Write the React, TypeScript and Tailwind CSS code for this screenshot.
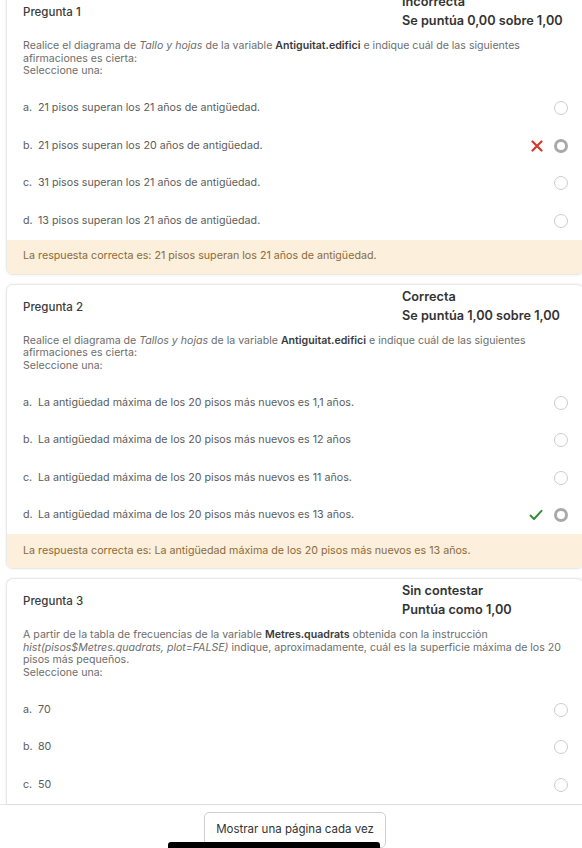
import React from 'react';

type Option = { letter: string; text: string; selected?: boolean; mark?: 'wrong' | 'right' };

function Radio({ checked }: { checked?: boolean }) {
  return (
    <span
      className={
        checked
          ? 'block w-[14px] h-[14px] rounded-full border-[3px] border-[#a9a9a9] bg-white'
          : 'block w-[14px] h-[14px] rounded-full border border-[#cdcdcd] bg-white'
      }
    />
  );
}

function WrongMark() {
  return (
    <svg width="12" height="12" viewBox="0 0 12 12" className="mr-[11px]">
      <path d="M1.5 1.5 L10.5 10.5 M10.5 1.5 L1.5 10.5" stroke="#d2392b" strokeWidth="2.2" strokeLinecap="round" />
    </svg>
  );
}

function RightMark() {
  return (
    <svg width="14" height="12" viewBox="0 0 14 12" className="mr-[11px]">
      <path d="M1.5 6.5 L5 10 L12.5 1.8" stroke="#3b8a3a" strokeWidth="2" fill="none" strokeLinecap="round" strokeLinejoin="round" />
    </svg>
  );
}

function OptionRow({ o }: { o: Option }) {
  return (
    <div className="flex items-center h-[37.5px] pl-[16px] pr-[15px] text-[10.7px] text-[#5c5c5c]">
      <span className="w-[15px] shrink-0">{o.letter}.</span>
      <span className="flex-1">{o.text}</span>
      {o.mark === 'wrong' && <WrongMark />}
      {o.mark === 'right' && <RightMark />}
      <Radio checked={o.selected} />
    </div>
  );
}

function Header({ n, state, grade }: { n: number; state: string; grade: string }) {
  return (
    <div className="flex items-center pt-[2px] pl-[16px]">
      <div className="w-[379px] text-[11.5px] font-medium text-[#3a3a3a] pt-[4px]">Pregunta {n}</div>
      <div className="text-[12.7px] font-semibold text-[#333] leading-[19px]">
        <div>{state}</div>
        <div>{grade}</div>
      </div>
    </div>
  );
}

function Card({
  n,
  state,
  grade,
  text,
  options,
  feedback,
  last,
}: {
  n: number;
  state: string;
  grade: string;
  text: React.ReactNode;
  options: Option[];
  feedback?: string;
  last?: boolean;
}) {
  return (
    <div
      className={
        last
          ? 'w-[578px] bg-white border border-b-0 border-[#e8e8e8] rounded-t-[7px] overflow-hidden shadow-[0_0_3px_rgba(0,0,0,0.08)]'
          : 'w-[578px] bg-white border border-[#e8e8e8] rounded-[7px] overflow-hidden shadow-[0_0_3px_rgba(0,0,0,0.08)]'
      }
    >
      <Header n={n} state={state} grade={grade} />
      <div className="mt-[10px] pl-[16px] pr-[20px] text-[10.6px] leading-[12.5px] text-[#6d6d6d]">
        {text}
        <div>Seleccione una:</div>
      </div>
      <div className="mt-[12px]">
        {options.map((o) => (
          <OptionRow key={o.letter} o={o} />
        ))}
      </div>
      {feedback && (
        <div className="h-[34px] flex items-center pl-[16px] bg-[#fcefdc] text-[10.7px] text-[#8b6b3b]">
          {feedback}
        </div>
      )}
    </div>
  );
}

export default function App() {
  return (
    <div className="relative w-[582px] h-[848px] overflow-hidden bg-white font-['Inter','Noto_Sans',sans-serif]">
      <div className="mt-[-11px] pl-[6px] flex flex-col gap-[9px]">
        <Card
          n={1}
          state="Incorrecta"
          grade="Se puntúa 0,00 sobre 1,00"
          text={
            <div>
              Realice el diagrama de <i>Tallo y hojas</i> de la variable{' '}
              <b className="font-semibold text-[#3a3a3a]">Antiguitat.edifici</b> e indique cuál de las siguientes
              <br />
              afirmaciones es cierta:
            </div>
          }
          options={[
            { letter: 'a', text: '21 pisos superan los 21 años de antigüedad.' },
            { letter: 'b', text: '21 pisos superan los 20 años de antigüedad.', selected: true, mark: 'wrong' },
            { letter: 'c', text: '31 pisos superan los 21 años de antigüedad.' },
            { letter: 'd', text: '13 pisos superan los 21 años de antigüedad.' },
          ]}
          feedback="La respuesta correcta es: 21 pisos superan los 21 años de antigüedad."
        />
        <Card
          n={2}
          state="Correcta"
          grade="Se puntúa 1,00 sobre 1,00"
          text={
            <div>
              Realice el diagrama de <i>Tallos y hojas</i> de la variable{' '}
              <b className="font-semibold text-[#3a3a3a]">Antiguitat.edifici</b> e indique cuál de las siguientes
              <br />
              afirmaciones es cierta:
            </div>
          }
          options={[
            { letter: 'a', text: 'La antigüedad máxima de los 20 pisos más nuevos es 1,1 años.' },
            { letter: 'b', text: 'La antigüedad máxima de los 20 pisos más nuevos es 12 años' },
            { letter: 'c', text: 'La antigüedad máxima de los 20 pisos más nuevos es 11 años.' },
            { letter: 'd', text: 'La antigüedad máxima de los 20 pisos más nuevos es 13 años.', selected: true, mark: 'right' },
          ]}
          feedback="La respuesta correcta es: La antigüedad máxima de los 20 pisos más nuevos es 13 años."
        />
        <Card
          n={3}
          state="Sin contestar"
          grade="Puntúa como 1,00"
          last
          text={
            <div>
              A partir de la tabla de frecuencias de la variable{' '}
              <b className="font-semibold text-[#3a3a3a]">Metres.quadrats</b> obtenida con la instrucción
              <br />
              <i>hist(pisos$Metres.quadrats, plot=FALSE)</i> indique, aproximadamente, cuál es la superficie máxima de los 20
              <br />
              pisos más pequeños.
            </div>
          }
          options={[
            { letter: 'a', text: '70' },
            { letter: 'b', text: '80' },
            { letter: 'c', text: '50' },
          ]}
        />
      </div>
      <div className="border-t border-[#e6e6e6] bg-white flex justify-center pl-[8px] pt-[7px]">
        <button className="w-[182px] h-[36px] border border-[#cfcfcf] rounded-[5px] bg-white text-[11.5px] text-[#333]">
          Mostrar una página cada vez
        </button>
      </div>
      <div className="absolute left-[168px] top-[842px] w-[212px] h-[10px] bg-black rounded-t-[3px]" />
    </div>
  );
}
